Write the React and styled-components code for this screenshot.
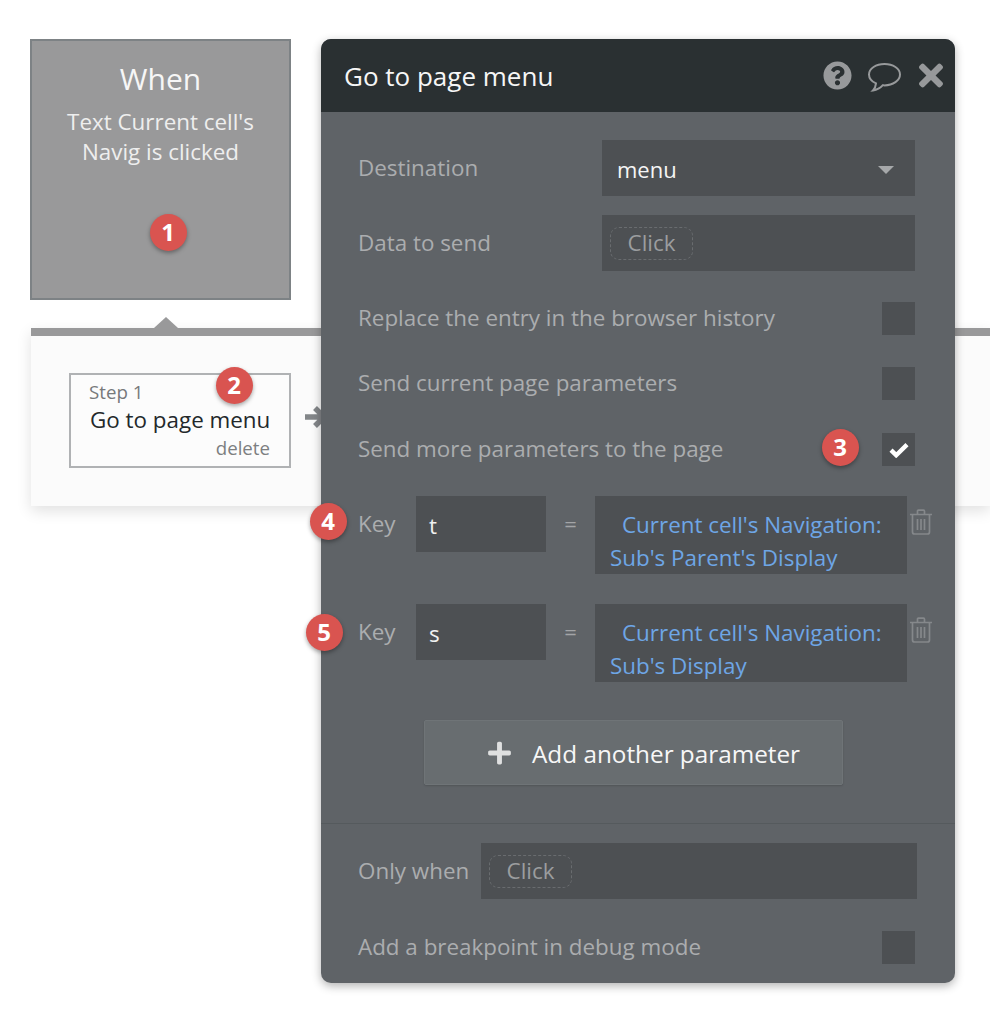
import React from 'react';
import styled, { createGlobalStyle } from 'styled-components';
import { FaQuestionCircle, FaTimes, FaPlus } from 'react-icons/fa';

const Global = createGlobalStyle`
  html, body { margin: 0; padding: 0; background: #fff; }
  body { font-family: "Open Sans", "Noto Sans", sans-serif; }
`;

const Page = styled.div`
  position: relative;
  width: 990px;
  height: 1024px;
  overflow: hidden;
  background: #fff;
  padding-top: 39px;
  box-sizing: border-box;
`;

const WhenCard = styled.div`
  position: relative;
  width: 261px;
  height: 261px;
  margin-left: 30px;
  box-sizing: border-box;
  border: 2px solid #7d8285;
  background: #99999a;
  color: #eeeeee;
  text-align: center;
  padding-top: 19px;
`;

const WhenTitle = styled.div`
  font-size: 30px;
  line-height: 38px;
  color: #f6f6f6;
`;

const WhenText = styled.div`
  font-size: 22.4px;
  line-height: 30px;
  margin-top: 9px;
`;

const Workflow = styled.div`
  position: relative;
  margin: 28px 0 0 31px;
  height: 178px;
  box-sizing: border-box;
  border-top: 8px solid #99999a;
  background: #fbfbfb;
  padding: 37px 0 0 38px;
  box-shadow: 0 5px 14px rgba(0, 0, 0, 0.12);
  &::before {
    content: '';
    position: absolute;
    left: 123px;
    top: -19px;
    border-left: 12px solid transparent;
    border-right: 12px solid transparent;
    border-bottom: 11px solid #99999a;
  }
`;

const StepBox = styled.div`
  position: relative;
  width: 222px;
  height: 95px;
  box-sizing: border-box;
  border: 2px solid #b0b2b4;
  background: #fcfcfc;
  padding: 4px 0 0 18px;
`;

const StepLabel = styled.div`
  font-size: 18.7px;
  line-height: 26px;
  color: #77797b;
`;

const StepName = styled.div`
  font-size: 22.4px;
  line-height: 30px;
  margin-left: 1px;
  color: #23282b;
  white-space: nowrap;
`;

const StepDelete = styled.div`
  font-size: 18.7px;
  line-height: 26px;
  color: #7d7f81;
  text-align: right;
  padding-right: 19px;
`;

const StepArrow = styled.svg`
  position: absolute;
  left: 274px;
  top: 70px;
  width: 22px;
  height: 22px;
`;

const Panel = styled.div`
  position: absolute;
  left: 321px;
  top: 39px;
  width: 634px;
  height: 944px;
  border-radius: 10px;
  background: #5f6367;
  box-shadow: 0 3px 10px rgba(0, 0, 0, 0.3);
  overflow: hidden;
`;

const Header = styled.div`
  display: flex;
  align-items: center;
  height: 73px;
  background: #2a3032;
  padding: 0 12px 0 23px;
  color: #f6f6f6;
`;

const Title = styled.div`
  flex: 1;
  font-size: 26px;
  line-height: 34px;
  padding-top: 1px;
`;

const HeaderIcons = styled.div`
  display: flex;
  align-items: center;
  color: #97999b;
`;

const HelpIcon = styled(FaQuestionCircle)`
  width: 29px;
  height: 29px;
`;

const BubbleIcon = styled.svg`
  width: 35px;
  height: 31px;
  margin: 3px 0 0 15px;
`;

const CloseIcon = styled(FaTimes)`
  width: 24px;
  height: 35px;
  margin-left: 17px;
`;

const Body = styled.div`
  padding: 28px 40px 0 37px;
`;

const Row = styled.div`
  display: flex;
  align-items: center;
  justify-content: space-between;
  margin-top: ${(p) => p.$top || 0}px;
`;

const Label = styled.div`
  font-size: 22.4px;
  line-height: 30px;
  color: #abadaf;
  white-space: nowrap;
`;

const CheckLabel = styled(Label)`
  margin-bottom: 2px;
`;

const Field = styled.div`
  display: flex;
  align-items: center;
  box-sizing: border-box;
  width: ${(p) => p.$width || 313}px;
  height: 56px;
  background: #4d5053;
  padding: 0 8px;
  flex: none;
`;

const SelectValue = styled.div`
  flex: 1;
  font-size: 22px;
  line-height: 30px;
  color: #f5f5f5;
  padding: 2px 0 0 7px;
`;

const SelectCaret = styled.div`
  width: 0;
  height: 0;
  margin: 4px 13px 0 0;
  border-left: 8px solid transparent;
  border-right: 8px solid transparent;
  border-top: 8px solid #a6a8aa;
`;

const ClickChip = styled.div`
  box-sizing: border-box;
  width: 83px;
  height: 33px;
  border: 1.5px dashed #696c6f;
  border-radius: 9px;
  text-align: center;
  font-size: 22.4px;
  line-height: 29px;
  color: #9b9d9f;
`;

const CheckBox = styled.div`
  display: flex;
  align-items: center;
  justify-content: center;
  width: 33px;
  height: 33px;
  background: #4d5053;
  flex: none;
`;

const CheckMark = styled.svg`
  width: 20px;
  height: 16px;
`;

const ParamRow = styled.div`
  display: flex;
  align-items: flex-start;
  margin-top: 30px;
`;

const KeyLabel = styled(Label)`
  width: 58px;
  line-height: 56px;
  flex: none;
`;

const KeyField = styled(Field)`
  font-size: 22.4px;
  color: #f0f0f0;
  padding: 2px 0 0 13px;
`;

const Equals = styled.div`
  width: 49px;
  flex: none;
  text-align: center;
  font-size: 22px;
  line-height: 54px;
  color: #a3a5a7;
`;

const ValueField = styled.div`
  width: 312px;
  height: 78px;
  box-sizing: border-box;
  background: #4d5053;
  padding: 12px 10px 0 15px;
  font-size: 22.4px;
  line-height: 33px;
  color: #6ea6e6;
  white-space: nowrap;
  overflow: hidden;
  flex: none;
`;

const ValueLine = styled.div`
  padding-left: ${(p) => (p.$indent ? 12 : 0)}px;
`;

const TrashIcon = styled.svg`
  width: 24px;
  height: 26px;
  margin: 13px 0 0 2px;
  flex: none;
`;

const AddButton = styled.div`
  display: flex;
  align-items: center;
  box-sizing: border-box;
  width: 419px;
  height: 65px;
  margin: 38px 0 0 66px;
  padding: 1px 0 0 61px;
  background: #686d70;
  border: 1px solid #6f7477;
  border-radius: 2px;
  box-shadow: 0 1px 2px rgba(0, 0, 0, 0.15);
  font-size: 24.3px;
  color: #f7f7f7;
`;

const PlusIcon = styled(FaPlus)`
  width: 27px;
  height: 26px;
  margin-right: 19px;
  color: #dfe0e0;
`;

const Divider = styled.div`
  height: 1px;
  margin-top: 38px;
  background: #555a5d;
`;

const FooterRow = styled(Row)`
  padding: 0 ${(p) => p.$right || 38}px 0 37px;
`;

const OnlyField = styled(Field)`
  width: 436px;
`;

const Badge = styled.div`
  position: absolute;
  left: ${(p) => p.$x - 18.5}px;
  top: ${(p) => p.$y - 18.5}px;
  width: 37px;
  height: 37px;
  border-radius: 50%;
  background: #d95450;
  color: #fff;
  font-size: 24px;
  font-weight: 700;
  line-height: 35px;
  text-align: center;
  box-shadow: 0 2px 4px rgba(0, 0, 0, 0.35);
  z-index: 5;
`;

const Trash = () => (
  <TrashIcon viewBox="0 0 24 26" fill="none" stroke="#85888b" strokeWidth="1.7">
    <path d="M1 5.5h22M8.5 5V2.2q0-1 1-1h5q1 0 1 1V5" />
    <path d="M3.5 6v17q0 2 2 2h13q2 0 2-2V6" />
    <path d="M8.5 10v11M12 10v11M15.5 10v11" />
  </TrashIcon>
);

const Check = () => (
  <CheckMark viewBox="0 0 20 16" fill="none" stroke="#fff" strokeWidth="4.4">
    <path d="M2 8.2l5.2 5L18 2.6" />
  </CheckMark>
);

const Param = ({ k, line1, line2 }) => (
  <ParamRow>
    <KeyLabel>Key</KeyLabel>
    <KeyField $width={130}>{k}</KeyField>
    <Equals>=</Equals>
    <ValueField>
      <ValueLine $indent>{line1}</ValueLine>
      <ValueLine>{line2}</ValueLine>
    </ValueField>
    <Trash />
  </ParamRow>
);

export default function App() {
  return (
    <Page>
      <Global />
      <WhenCard>
        <WhenTitle>When</WhenTitle>
        <WhenText>
          Text Current cell's
          <br />
          Navig is clicked
        </WhenText>
      </WhenCard>
      <Workflow>
        <StepBox>
          <StepLabel>Step 1</StepLabel>
          <StepName>Go to page menu</StepName>
          <StepDelete>delete</StepDelete>
        </StepBox>
        <StepArrow viewBox="0 0 22 22" fill="none" stroke="#838689" strokeWidth="5.5">
          <path d="M0 11h19M10 2l9 9-9 9" />
        </StepArrow>
      </Workflow>
      <Panel>
        <Header>
          <Title>Go to page menu</Title>
          <HeaderIcons>
            <HelpIcon />
            <BubbleIcon viewBox="0 0 35 31" fill="none" stroke="#97999b" strokeWidth="2">
              <path d="M17.5 2C9 2 2 6.6 2 12.5c0 3.8 2.8 7 7 8.9-.2 2.5-1.5 5.4-3 7 3.6-.6 7.4-2.6 9.6-5.1.6 0 1.3.1 1.9.1C26 23.4 33 18.4 33 12.5S26 2 17.5 2z" />
            </BubbleIcon>
            <CloseIcon />
          </HeaderIcons>
        </Header>
        <Body>
          <Row>
            <Label>Destination</Label>
            <Field>
              <SelectValue>menu</SelectValue>
              <SelectCaret />
            </Field>
          </Row>
          <Row $top={19}>
            <Label>Data to send</Label>
            <Field>
              <ClickChip>Click</ClickChip>
            </Field>
          </Row>
          <Row $top={31}>
            <CheckLabel>Replace the entry in the browser history</CheckLabel>
            <CheckBox />
          </Row>
          <Row $top={32}>
            <CheckLabel>Send current page parameters</CheckLabel>
            <CheckBox />
          </Row>
          <Row $top={33}>
            <CheckLabel>Send more parameters to the page</CheckLabel>
            <CheckBox>
              <Check />
            </CheckBox>
          </Row>
          <Param k="t" line1="Current cell's Navigation:" line2="Sub's Parent's Display" />
          <Param k="s" line1="Current cell's Navigation:" line2="Sub's Display" />
          <AddButton>
            <PlusIcon />
            Add another parameter
          </AddButton>
        </Body>
        <Divider />
        <FooterRow $top={19}>
          <Label>Only when</Label>
          <OnlyField>
            <ClickChip>Click</ClickChip>
          </OnlyField>
        </FooterRow>
        <FooterRow $top={32} $right={40}>
          <CheckLabel>Add a breakpoint in debug mode</CheckLabel>
          <CheckBox />
        </FooterRow>
      </Panel>
      <Badge $x={168} $y={232}>1</Badge>
      <Badge $x={234} $y={385}>2</Badge>
      <Badge $x={840} $y={447}>3</Badge>
      <Badge $x={328} $y={521}>4</Badge>
      <Badge $x={324} $y={632}>5</Badge>
    </Page>
  );
}
